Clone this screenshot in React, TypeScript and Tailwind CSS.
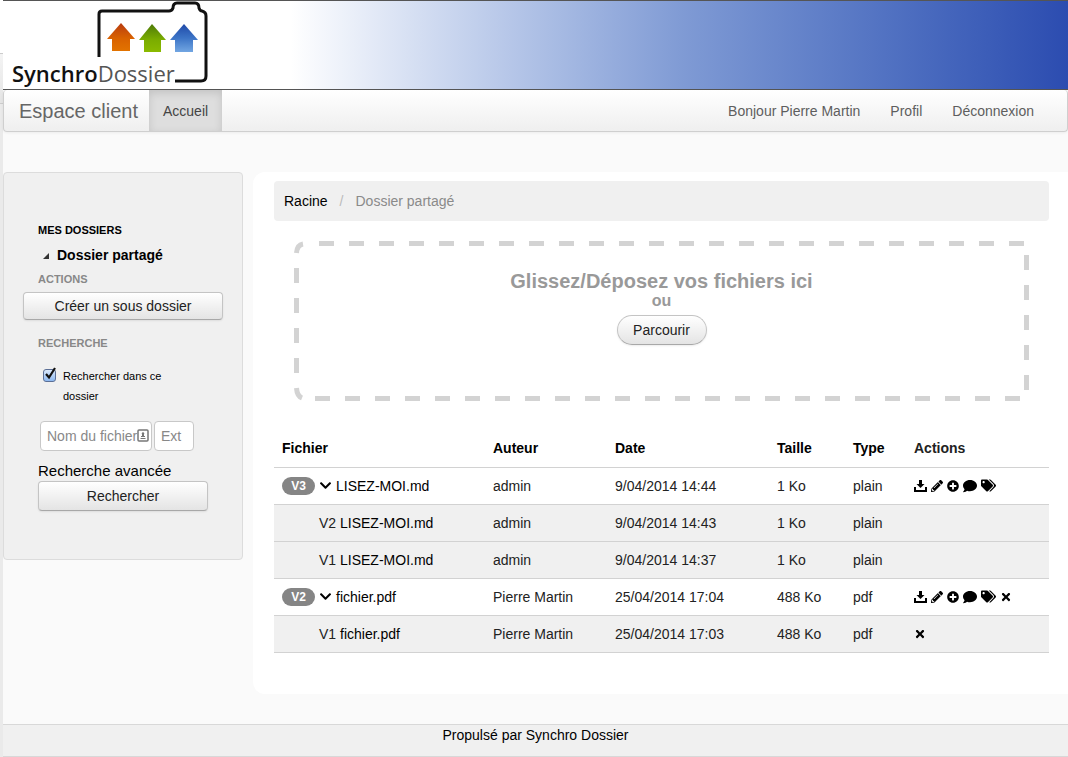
import { useState, type ReactNode } from "react";
import { FaChevronDown, FaComment, FaPencilAlt, FaPlusCircle, FaTags, FaTimes } from "react-icons/fa";

type Row = {
  version: string;
  name: string;
  author: string;
  date: string;
  size: string;
  type: string;
  head: boolean;
  tools: boolean;
  removable: boolean;
};

const rows: Row[] = [
  { version: "V3", name: "LISEZ-MOI.md", author: "admin", date: "9/04/2014 14:44", size: "1 Ko", type: "plain", head: true, tools: true, removable: false },
  { version: "V2", name: "LISEZ-MOI.md", author: "admin", date: "9/04/2014 14:43", size: "1 Ko", type: "plain", head: false, tools: false, removable: false },
  { version: "V1", name: "LISEZ-MOI.md", author: "admin", date: "9/04/2014 14:37", size: "1 Ko", type: "plain", head: false, tools: false, removable: false },
  { version: "V2", name: "fichier.pdf", author: "Pierre Martin", date: "25/04/2014 17:04", size: "488 Ko", type: "pdf", head: true, tools: true, removable: true },
  { version: "V1", name: "fichier.pdf", author: "Pierre Martin", date: "25/04/2014 17:03", size: "488 Ko", type: "pdf", head: false, tools: false, removable: true },
];

function Logo() {
  return (
    <svg width="210" height="89" viewBox="0 0 210 89" role="img" aria-label="SynchroDossier">
      <defs>
        <linearGradient id="orange" x1="0" y1="0" x2="0" y2="1">
          <stop offset="0" stopColor="#b83c10" />
          <stop offset="0.55" stopColor="#d96200" />
          <stop offset="1" stopColor="#e27300" />
        </linearGradient>
        <linearGradient id="green" x1="0" y1="0" x2="0" y2="1">
          <stop offset="0" stopColor="#4d7a08" />
          <stop offset="0.55" stopColor="#7aac00" />
          <stop offset="1" stopColor="#8aba00" />
        </linearGradient>
        <linearGradient id="blue" x1="0" y1="0" x2="0" y2="1">
          <stop offset="0" stopColor="#1f49a8" />
          <stop offset="0.5" stopColor="#3c74c6" />
          <stop offset="1" stopColor="#72a6e2" />
        </linearGradient>
      </defs>
      <path
        d="M96 56V13Q96 10 99 10H166Q169 10 170 7Q170 2 174 2H192Q196 2 196 7Q197 10 199 10Q203 11 203 15V75Q203 80 198 80H172"
        fill="none"
        stroke="#111"
        strokeWidth="3"
      />
      <path d="M118 22L132 38H127V50H109V38H104Z" fill="url(#orange)" />
      <path d="M149 23L163 39H158V51H141V39H136Z" fill="url(#green)" />
      <path d="M181 23L195 39H190V51H172V39H167Z" fill="url(#blue)" />
      <text x="9" y="81" className="font-['Liberation_Sans_Narrow','Open_Sans',sans-serif] text-[22px] font-semibold" fill="#111">
        Synchro<tspan fill="#555" className="font-normal">Dossier</tspan>
      </text>
    </svg>
  );
}

function DashedFrame() {
  return (
    <svg className="pointer-events-none absolute inset-0 h-full w-full" stroke="#d3d3d3" strokeWidth="5" fill="none" aria-hidden="true">
      <line x1="25" y1="2.5" x2="100%" y2="2.5" strokeDasharray="15" />
      <line x1="2.5" y1="27" x2="2.5" y2="142" strokeDasharray="15" />
      <path d="M2.5 12Q3 4 9 3" />
      <path d="M2.5 147Q3 155 8 157" />
      <svg y="100%" height="5" overflow="visible">
        <line x1="21" y1="-2.5" x2="100%" y2="-2.5" strokeDasharray="15" />
      </svg>
      <svg x="100%" width="5" overflow="visible">
        <line x1="-2.5" y1="14" x2="-2.5" y2="151" strokeDasharray="15" />
      </svg>
    </svg>
  );
}

function DownloadIcon() {
  return (
    <svg width="13" height="12" viewBox="0 0 13 12" fill="currentColor" aria-hidden="true">
      <path d="M5 0H8V4H10.500L6.500 8L2.500 4H5ZM0 7H2V10H11V7H13V12H0Z" />
    </svg>
  );
}

function IconButton({ label, children }: { label: string; children: ReactNode }) {
  return (
    <button type="button" aria-label={label} className="flex cursor-pointer items-center text-black">
      {children}
    </button>
  );
}

const button =
  "cursor-pointer border border-[#c4c4c4] border-b-[#a8a8a8] bg-linear-to-b from-white to-[#e4e4e4] text-center text-[#222] shadow-[0_1px_2px_rgba(0,0,0,0.08)]";
const field =
  "h-[30px] rounded border border-[#c8c8c8] bg-white pl-1.5 text-sm text-[#555] placeholder:text-[#888] focus:outline-none";

export default function App() {
  const [checked, setChecked] = useState(true);
  return (
    <div className="flex min-h-screen bg-[#fafafa] font-['Liberation_Sans',Arial,sans-serif] text-sm leading-5 text-[#222]">
      <div className="flex w-[3px] shrink-0 flex-col bg-[#eaeaea]">
        <div className="h-[54px] border-b border-[#ccc] bg-white" />
        <div className="h-[50px] border-b border-[#ccc] bg-linear-to-b from-[#f4f4f4] to-[#e4e4e4]" />
      </div>
      <div className="flex min-w-0 flex-1 flex-col">
        <header className="flex h-[90px] border-y border-[#555] bg-linear-to-r from-white from-27% via-[#7f9ad4] via-64% to-[#2c4cb0]">
          <Logo />
        </header>

        <nav className="flex h-[42px] items-stretch rounded border border-t-0 border-[#cfcfcf] bg-linear-to-b from-white to-[#efefef] text-[#5e5e5e] shadow-[0_1px_3px_rgba(0,0,0,0.06)]">
          <a href="#" className="flex w-[145px] items-center pl-[15px] text-xl text-[#666]">Espace client</a>
          <a href="#" className="flex items-center bg-[#dedede] px-3.5 text-[#444] shadow-[inset_0_3px_8px_rgba(0,0,0,0.125)]">Accueil</a>
          <div className="ml-auto flex items-center gap-[30px] pr-[33px]">
            <a href="#">Bonjour Pierre Martin</a>
            <a href="#">Profil</a>
            <a href="#">Déconnexion</a>
          </div>
        </nav>

        <div className="mt-10 flex items-start gap-2.5">
          <aside className="flex h-[388px] w-60 shrink-0 flex-col rounded border border-[#dcdcdc] bg-[#f0f0f0] px-[19px] pt-[47px]">
            <h2 className="pl-[15px] text-[11px] font-bold text-black">MES DOSSIERS</h2>
            <a href="#" className="mt-[5px] flex items-center gap-2 pl-5 font-bold text-black">
              <svg width="6" height="6" viewBox="0 0 6 6" className="mt-0.5" aria-hidden="true">
                <path d="M6 0V6H0Z" fill="#333" />
              </svg>
              Dossier partagé
            </a>
            <h2 className="mt-1 pl-[15px] text-[11px] font-bold text-[#888]">ACTIONS</h2>
            <button type="button" className={`${button} mt-[3px] h-7 rounded`}>Créer un sous dossier</button>
            <h2 className="mt-[13px] pl-[15px] text-[11px] font-bold text-[#888]">RECHERCHE</h2>
            <form className="flex flex-col pl-[15px]" onSubmit={(e) => e.preventDefault()}>
              <label className="mt-[13px] flex items-start gap-[7px] pl-[5px] text-[11px] text-black">
                <span className="relative mt-[3px] flex">
                  <input
                    type="checkbox"
                    checked={checked}
                    onChange={(e) => setChecked(e.target.checked)}
                    className="size-[13px] appearance-none rounded-[3px] border border-[#5b6f96] bg-linear-to-b from-[#dbe9fb] to-[#8db8f0]"
                  />
                  {checked && (
                    <svg width="14" height="14" viewBox="0 0 14 14" className="pointer-events-none absolute -top-0.5 left-0" aria-hidden="true">
                      <path d="M3 7L6 10.500L12 1" fill="none" stroke="#111" strokeWidth="2.200" />
                    </svg>
                  )}
                </span>
                <span className="w-[110px]">Rechercher dans ce dossier</span>
              </label>
              <div className="mt-[15px] flex gap-0.5 pl-0.5">
                <div className="relative w-28">
                  <input aria-label="Nom du fichier" placeholder="Nom du fichier" className={`${field} w-full`} />
                  <svg width="12" height="13" viewBox="0 0 12 13" className="pointer-events-none absolute top-2 right-[3px]" aria-hidden="true">
                    <rect x="1" y="1" width="10" height="11" rx="1" fill="#fff" stroke="#777" strokeWidth="1.500" />
                    <circle cx="6" cy="4.500" r="1.200" fill="#777" />
                    <path d="M5 5H7V7H8V8H4V7H5ZM3.500 9H8.500V10H3.500Z" fill="#777" />
                  </svg>
                </div>
                <input aria-label="Ext" placeholder="Ext" className={`${field} w-10`} />
              </div>
              <a href="#" className="mt-2.5 text-[15px] text-black">Recherche avancée</a>
              <button type="submit" className={`${button} h-[30px] w-[170px] rounded`}>Rechercher</button>
            </form>
          </aside>

          <main className="flex min-h-[522px] min-w-0 flex-1 flex-col rounded-l-xl bg-white pt-[9px] pr-[19px] pl-[21px]">
            <div className="flex h-10 items-center rounded bg-[#f0f0f0] px-2.5">
              <a href="#" className="text-black">Racine</a>
              <span className="px-3 text-[#bbb]">/</span>
              <span className="text-[#8a8a8a]">Dossier partagé</span>
            </div>

            <section className="relative mx-5 mt-5 flex h-40 flex-col items-center pt-[30px]">
              <DashedFrame />
              <h1 className="text-xl leading-5 font-bold text-[#999]">Glissez/Déposez vos fichiers ici</h1>
              <p className="text-base leading-5 font-bold text-[#999]">ou</p>
              <button type="button" className={`${button} mt-1 h-[30px] w-[90px] rounded-full`}>Parcourir</button>
            </section>

            <table className="mt-[29px] w-full table-fixed border-collapse text-left">
              <colgroup>
                <col className="w-[211px]" />
                <col className="w-[122px]" />
                <col className="w-[162px]" />
                <col className="w-[76px]" />
                <col className="w-[61px]" />
                <col />
              </colgroup>
              <thead>
                <tr className="h-[37px] text-black">
                  <th className="px-2">Fichier</th>
                  <th className="px-2">Auteur</th>
                  <th className="px-2">Date</th>
                  <th className="px-2">Taille</th>
                  <th className="px-2">Type</th>
                  <th className="px-2 text-[#222]">Actions</th>
                </tr>
              </thead>
              <tbody>
                {rows.map((r) => (
                  <tr key={r.date} className={`h-[37px] border-y border-[#d2d2d2] ${r.head ? "bg-white" : "bg-[#f0f0f0]"}`}>
                    <td className="px-2">
                      {r.head ? (
                        <div className="flex items-center">
                          <span className="flex h-[18px] w-[33px] items-center justify-center rounded-full bg-[#858585] text-xs font-bold text-white">{r.version}</span>
                          <button type="button" aria-label="Versions" className="mx-1 cursor-pointer text-black"><FaChevronDown size={13} /></button>
                          <a href="#" className="text-black">{r.name}</a>
                        </div>
                      ) : (
                        <div className="pl-[37px]">
                          {r.version} <a href="#" className="text-black">{r.name}</a>
                        </div>
                      )}
                    </td>
                    <td className="px-2">{r.author}</td>
                    <td className="px-2">{r.date}</td>
                    <td className="px-2">{r.size}</td>
                    <td className="px-2">{r.type}</td>
                    <td className="px-2">
                      <div className="flex items-center gap-1">
                        {r.tools && (
                          <>
                            <IconButton label="Télécharger"><DownloadIcon /></IconButton>
                            <IconButton label="Renommer"><FaPencilAlt size={12} /></IconButton>
                            <IconButton label="Ajouter"><FaPlusCircle size={12} /></IconButton>
                            <IconButton label="Commenter"><FaComment size={14} /></IconButton>
                            <IconButton label="Étiquettes"><FaTags size={15} /></IconButton>
                          </>
                        )}
                        {r.removable && <IconButton label="Supprimer"><FaTimes size={12} /></IconButton>}
                      </div>
                    </td>
                  </tr>
                ))}
              </tbody>
            </table>
          </main>
        </div>

        <footer className="mt-[30px] h-[33px] border-y border-[#d8d8d8] bg-[#f0f0f0] text-center text-black">
          Propulsé par <a href="#">Synchro Dossier</a>
        </footer>
      </div>
    </div>
  );
}
